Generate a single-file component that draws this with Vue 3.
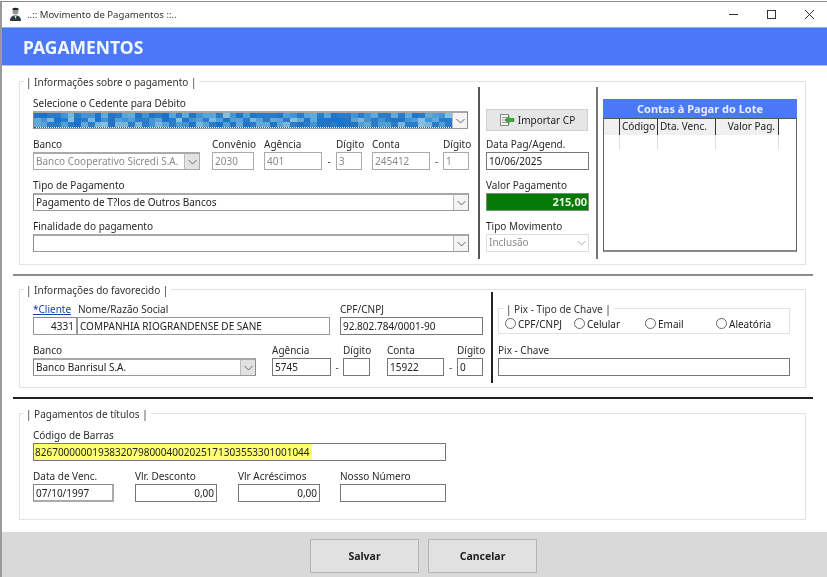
<script setup>
const palette = ['#2a7cc8', '#4394d2', '#62a9d8', '#78b6dc', '#4ea0d6', '#2274c6', '#86bfe0', '#1a72cf', '#58a3d8'];
const cells = [];
let seed = 17;
for (let i = 0; i < 62 * 3; i++) {
  seed = (seed * 73 + 41) % 1009;
  const row = i % 3;
  let idx = seed % palette.length;
  if (row === 0) idx = [0, 5, 1, 0][seed % 4];
  cells.push(palette[idx]);
}
const radios = [
  { label: 'CPF/CNPJ', w: 69 },
  { label: 'Celular', w: 71 },
  { label: 'Email', w: 71 },
  { label: 'Aleatória', w: 70 }
];
</script>

<template>
  <div class="win">
    <div class="titlebar">
      <svg class="appicon" width="13" height="14" viewBox="0 0 13 14">
        <path d="M1 14c0-4 2-5.500 5.500-5.500S12 10 12 14z" fill="#2f3b3f" />
        <circle cx="6.500" cy="4.500" r="3" fill="#8d9698" />
        <path d="M3.500 3h6V1.600C8 .6 5 .6 3.500 1.600z" fill="#1f2628" />
        <path d="M5.500 9h2l-1 3z" fill="#e4e8e8" />
      </svg>
      <span class="wintitle">..:: Movimento de Pagamentos ::..</span>
      <div class="winctl">
        <svg width="11" height="11" viewBox="0 0 11 11"><path d="M1 5.500h9" stroke="#333" fill="none" /></svg>
        <svg width="11" height="11" viewBox="0 0 11 11"><rect x="1.500" y="1.500" width="8" height="8" stroke="#333" fill="none" /></svg>
        <svg width="11" height="11" viewBox="0 0 11 11"><path d="M1 1l9 9M10 1l-9 9" stroke="#333" fill="none" /></svg>
      </div>
    </div>
    <div class="banner">PAGAMENTOS</div>

    <main class="content">
      <section class="group g1">
        <div class="legend">| Informações sobre o pagamento |</div>
        <div class="left">
          <label class="field">
            <span class="lbl">Selecione o Cedente para Débito</span>
            <div class="select sel-cedente">
              <div class="pixels">
                <i v-for="(c, i) in cells" :key="i" :style="{ background: c }"></i>
              </div>
              <span class="chev"><svg width="9" height="6" viewBox="0 0 9 6"><path d="M.5 1l4 4 4-4" /></svg></span>
            </div>
          </label>
          <div class="row r-gap">
            <div class="field w167">
              <span class="lbl">Banco</span>
              <div class="select off">
                <span class="val">Banco Cooperativo Sicredi S.A.</span>
                <span class="chev filled"><svg width="9" height="6" viewBox="0 0 9 6"><path d="M.5 1l4 4 4-4" /></svg></span>
              </div>
            </div>
            <div class="field w42 ml12"><span class="lbl">Convênio</span><div class="input off">2030</div></div>
            <div class="field w58 ml10"><span class="lbl">Agência</span><div class="input off">401</div></div>
            <span class="dash">-</span>
            <div class="field w26"><span class="lbl">Dígito</span><div class="input off">3</div></div>
            <div class="field w58 ml10"><span class="lbl">Conta</span><div class="input off">245412</div></div>
            <span class="dash dash-b">-</span>
            <div class="field w26"><span class="lbl">Dígito</span><div class="input off">1</div></div>
          </div>
          <div class="field r-gap">
            <span class="lbl">Tipo de Pagamento</span>
            <div class="select">
              <span class="val">Pagamento de T?los de Outros Bancos</span>
              <span class="chev"><svg width="9" height="6" viewBox="0 0 9 6"><path d="M.5 1l4 4 4-4" /></svg></span>
            </div>
          </div>
          <div class="field r-gap">
            <span class="lbl">Finalidade do pagamento</span>
            <div class="select">
              <span class="val"></span>
              <span class="chev"><svg width="9" height="6" viewBox="0 0 9 6"><path d="M.5 1l4 4 4-4" /></svg></span>
            </div>
          </div>
        </div>
        <div class="vline"></div>
        <div class="mid">
          <button class="import">
            <svg width="16" height="14" viewBox="0 0 16 14">
              <rect x="1.500" y="1.500" width="8" height="11" fill="#f4f4f4" stroke="#8a8a8a" />
              <path d="M3 4.500h5M3 7h3M3 9.500h5" stroke="#9a9a9a" />
              <path d="M15 5.500h-5V3L6 7l4 4V8.500h5z" fill="#3fa53a" stroke="#2a7f2c" stroke-width=".6" />
            </svg>
            <span>Importar CP</span>
          </button>
          <div class="field mid-data"><span class="lbl">Data Pag/Agend.</span><div class="input">10/06/2025</div></div>
          <div class="field r-gap"><span class="lbl">Valor Pagamento</span><div class="input money">215,00</div></div>
          <div class="field r-gap">
            <span class="lbl">Tipo Movimento</span>
            <div class="select off soft">
              <span class="val">Inclusão</span>
              <span class="chev plain"><svg width="9" height="6" viewBox="0 0 9 6"><path d="M.5 1l4 4 4-4" /></svg></span>
            </div>
          </div>
        </div>
        <div class="vline gray"></div>
        <div class="lote">
          <div class="lote-title">Contas à Pagar do Lote</div>
          <div class="lote-body">
            <div class="thead">
              <span class="c0"></span><span class="c1">Código</span><span class="c2">Dta. Venc.</span><span class="c3">Valor Pag.</span>
            </div>
            <div class="trow">
              <span class="c0"></span><span class="c1"></span><span class="c2"></span><span class="c3"></span>
            </div>
          </div>
        </div>
      </section>

      <hr class="sep thick" />

      <section class="group g2">
        <div class="legend">| Informações do favorecido |</div>
        <div class="g2-left">
          <div class="row">
            <div class="field w44">
              <a class="lbl link">*Cliente</a>
              <div class="input dim num">4331</div>
            </div>
            <div class="field w253">
              <span class="lbl lbl-nome">Nome/Razão Social</span>
              <div class="input soft2">COMPANHIA RIOGRANDENSE DE SANE</div>
            </div>
            <div class="field w143 ml10">
              <span class="lbl">CPF/CNPJ</span>
              <div class="input">92.802.784/0001-90</div>
            </div>
          </div>
          <div class="row g2-r2">
            <div class="field w223">
              <span class="lbl">Banco</span>
              <div class="select">
                <span class="val">Banco Banrisul S.A.</span>
                <span class="chev filled"><svg width="9" height="6" viewBox="0 0 9 6"><path d="M.5 1l4 4 4-4" /></svg></span>
              </div>
            </div>
            <div class="field w59 ml16"><span class="lbl">Agência</span><div class="input">5745</div></div>
            <span class="dash dash-c">-</span>
            <div class="field w27"><span class="lbl">Dígito</span><div class="input"></div></div>
            <div class="field w57 ml17"><span class="lbl">Conta</span><div class="input">15922</div></div>
            <span class="dash dash-d">-</span>
            <div class="field w26"><span class="lbl">Dígito</span><div class="input">0</div></div>
          </div>
        </div>
        <div class="vline dark short"></div>
        <div class="pix">
          <div class="pixgroup">
            <div class="legend small">| Pix - Tipo de Chave |</div>
            <label v-for="r in radios" :key="r.label" class="radio" :style="{ width: r.w + 'px' }">
              <i class="dot"></i><span>{{ r.label }}</span>
            </label>
          </div>
          <div class="field pixkey"><span class="lbl">Pix - Chave</span><div class="input"></div></div>
        </div>
      </section>

      <hr class="sep black" />

      <section class="group g3">
        <div class="legend">| Pagamentos de títulos |</div>
        <div class="field w413">
          <span class="lbl">Código de Barras</span>
          <div class="input barcode"><mark>826700000019383207980004002025171303553301001044</mark></div>
        </div>
        <div class="row g3-r2">
          <div class="field w81"><span class="lbl">Data de Venc.</span><div class="input soft3">07/10/1997</div></div>
          <div class="field w82 ml21"><span class="lbl">Vlr. Desconto</span><div class="input right">0,00</div></div>
          <div class="field w82 ml21"><span class="lbl">Vlr Acréscimos</span><div class="input right">0,00</div></div>
          <div class="field w106 ml20"><span class="lbl">Nosso Número</span><div class="input"></div></div>
        </div>
      </section>
    </main>

    <footer class="foot">
      <button class="act">Salvar</button>
      <button class="act">Cancelar</button>
    </footer>
  </div>
</template>

<style>
html, body { margin: 0; background: #fff; overflow: hidden; }
</style>

<style scoped>
.win {
  width: 827px; height: 576px; box-sizing: border-box;
  display: flex; flex-direction: column;
  border-top: 1px solid #8a8a8a; border-left: 2px solid #9a9a9a;
  background: #fff; margin-top: 1px;
  font-family: "Noto Sans", "DejaVu Sans", sans-serif; font-size: 10px; color: #222;
  filter: blur(0.35px);
}
.titlebar { height: 25px; flex: none; display: flex; align-items: center; padding-left: 7px; }
.appicon { margin-right: 5px; margin-top: -1px; }
.wintitle { font-size: 9.6px; color: #333; }
.winctl { margin-left: auto; display: flex; gap: 27px; padding-right: 12px; }
.banner {
  height: 39px; flex: none; background: #4a78f6; color: #f4f7ff;
  border-top: 1px solid #8fb0e6; border-bottom: 1px solid #b3c4dc; box-sizing: border-box;
  display: flex; align-items: center; padding-left: 21px;
  font-size: 17.5px; font-weight: 700;
}
.content { flex: 1; display: flex; flex-direction: column; align-items: flex-start; padding-top: 15px; }
.group { position: relative; box-sizing: border-box; width: 787px; margin-left: 17px; border: 1px solid #e2e2e2; }
.legend { position: absolute; left: 4px; top: -7px; background: #fff; padding: 0 3px 0 2px; line-height: 14px; color: #333; }
.legend.small { left: 5px; }
.sep { width: 800px; margin: 0 0 0 11px; border: 0; }
.thick { height: 2px; background: #8c8c8c; margin-top: 9px; margin-bottom: 13px; }
.black { height: 2px; background: #222; margin-top: 9px; margin-bottom: 14px; }

.field { display: flex; flex-direction: column; }
.lbl { height: 13px; line-height: 10px; white-space: nowrap; color: #2a2a2a; }
.row { display: flex; align-items: flex-end; }
.r-gap { margin-top: 10px; }
.w167 { width: 167px; } .w42 { width: 42px; } .w58 { width: 58px; } .w26 { width: 26px; }
.w44 { width: 44px; } .w253 { width: 253px; } .w143 { width: 143px; } .w223 { width: 223px; }
.w59 { width: 59px; } .w27 { width: 27px; } .w57 { width: 57px; } .w413 { width: 413px; }
.w81 { width: 81px; } .w82 { width: 82px; } .w106 { width: 106px; }
.ml10 { margin-left: 10px; } .ml12 { margin-left: 12px; } .ml16 { margin-left: 16px; }
.ml17 { margin-left: 17px; } .ml20 { margin-left: 20px; } .ml21 { margin-left: 21px; }
.dash { width: 14px; text-align: center; height: 18px; line-height: 18px; color: #444; }
.dash-b { width: 13px; } .dash-c { width: 12px; } .dash-d { width: 13px; }

.input {
  box-sizing: border-box; height: 18px; line-height: 16px; border: 1px solid #777; padding: 0 2px;
  background: #fff; white-space: nowrap; overflow: hidden; color: #222;
}
.input.off { border-color: #aaa; color: #8a8a8a; }
.input.dim { border-color: #999; border-top-color: #888; }
.input.num { text-align: right; }
.input.soft2 { border-color: #999; }
.input.soft3 { border-color: #888; border-right: 2px solid #aaa; border-bottom: 2px solid #aaa; }
.input.right { text-align: right; }
.input.money { background: #067a06; color: #e8f6e8; font-weight: 700; text-align: right; border: 1px solid #7c8f7c; padding-right: 1px; font-size: 11px; }
.select {
  box-sizing: border-box; height: 18px; display: flex; align-items: stretch;
  border: 1px solid #8a8a8a; border-top: 2px solid #a8a8a8; border-bottom-color: #9a9a9a; background: #fff;
}
.select .val { flex: 1; padding-left: 2px; line-height: 14px; white-space: nowrap; overflow: hidden; color: #222; }
.select.off { border-color: #aaa; }
.select.off .val { color: #8a8a8a; }
.select.soft { border: 1px solid #ddd; }
.chev { width: 14px; flex: none; display: flex; align-items: center; justify-content: center; border-left: 1px solid #bbb; background: #f4f4f4; }
.chev.filled { background: #e2e2e2; }
.chev.plain { border-left: 0; background: #fff; }
.chev svg path { fill: none; stroke: #666; }
.chev.plain svg path { stroke: #aaa; }

.g1 { height: 184px; display: flex; align-items: flex-start; padding: 5px 0 0 13px; }
.left { width: 436px; padding-top: 11px; flex: none; }
.sel-cedente { width: 435px; }
.pixels { flex: 1; display: grid; grid-template-columns: repeat(62, 1fr); grid-template-rows: repeat(3, 1fr); border-bottom: 1px dotted #555; overflow: hidden; }
.pixels i { display: block; }
.vline { width: 2px; height: 172px; background: #555; flex: none; margin-left: 9px; }
.vline.gray { margin-left: 7px; background: #777; }
.mid { width: 103px; margin-left: 6px; flex: none; padding-top: 22px; }
.import {
  width: 102px; height: 22px; display: flex; align-items: center; justify-content: center; gap: 3px; padding: 0;
  background: #e6e6e6; border: 1px solid #cfcfcf; font: inherit; color: #222;
}
.mid-data { margin-top: 8px; }
.lote { width: 194px; margin-left: 5px; padding-top: 12px; flex: none; }
.lote-title { height: 19px; line-height: 19px; background: #4a78f6; color: #e6eeff; font-weight: 700; text-align: center; font-size: 11px; }
.lote-body { box-sizing: border-box; height: 134px; border: 1px solid #666; border-bottom: 2px solid #888; border-top: 1px solid #555; }
.thead, .trow { display: grid; grid-template-columns: 16px 38px 58px 63px; }
.thead { height: 16px; line-height: 15px; }
.thead span { background: #f0f0f0; border-right: 1px solid #333; box-sizing: border-box; white-space: nowrap; padding: 0 2px; height: 16px; }
.thead .c1 { text-align: right; }
.thead .c3 { text-align: right; }
.thead span:last-child { padding-right: 3px; }
.trow { height: 14px; }
.trow span { border-right: 1px solid #ddd; border-bottom: 0; box-sizing: border-box; }

.g2 { height: 99px; display: flex; align-items: flex-start; padding: 2px 0 0 13px; }
.g2-left { width: 450px; flex: none; padding-top: 12px; }
.link { color: #1a3fb0; text-decoration: underline; }
.lbl-nome { margin-left: 1px; }
.g2-r2 { margin-top: 10px; }
.vline.dark { background: #222; width: 2px; height: 91px; margin-left: 8px; }
.pix { width: 292px; margin-left: 5px; padding-top: 16px; flex: none; }
.pixgroup { position: relative; box-sizing: border-box; height: 26px; border: 1px solid #e2e2e2; display: flex; align-items: center; padding: 5px 0 0 6px; }
.radio { display: flex; align-items: center; gap: 2px; flex: none; height: 16px; white-space: nowrap; }
.dot { width: 11px; height: 11px; box-sizing: border-box; border: 1px solid #666; border-radius: 50%; display: block; flex: none; background: #fff; }
.pixkey { margin-top: 11px; }

.g3 { height: 107px; padding: 16px 0 0 13px; }
.barcode { padding: 0; border-color: #777; }
.barcode mark { display: inline-block; background: #ffff73; color: #222; height: 16px; line-height: 16px; padding: 0 2px 0 1px; }
.g3-r2 { margin-top: 10px; }

.foot {
  height: 45px; flex: none; background: #d9d9d9;
  display: flex; align-items: flex-start; justify-content: flex-start; gap: 9px; padding: 7px 0 0 308px; box-sizing: border-box;
}
.act {
  width: 109px; height: 34px; background: #e1e1e1; border: 1px solid #b4b4b4;
  font: 700 10.5px "Noto Sans", sans-serif; color: #222; padding: 0;
}
</style>
